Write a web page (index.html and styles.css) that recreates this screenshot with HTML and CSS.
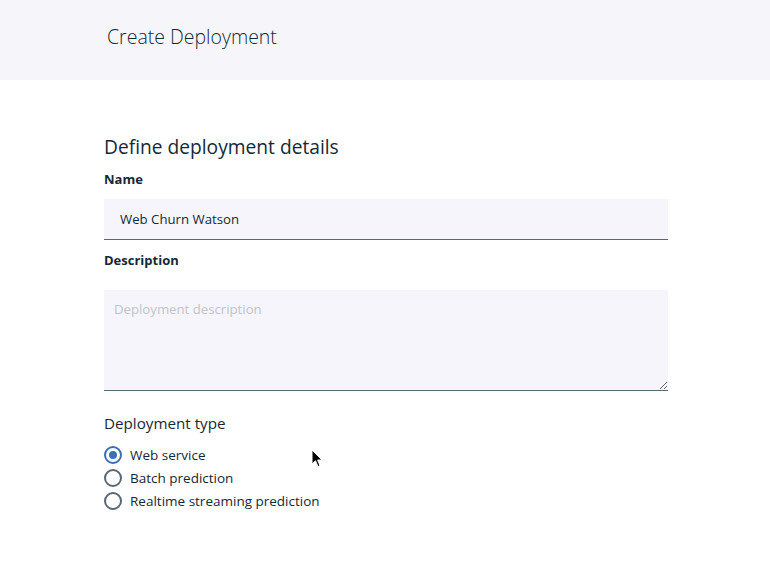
FILE: index.html
```html
<!DOCTYPE html>
<html lang="en">
<head>
<meta charset="utf-8">
<title>Create Deployment</title>
<link rel="stylesheet" href="styles.css">
</head>
<body>
<header class="header">
  <h1 class="header-title">Create Deployment</h1>
</header>
<main class="main">
  <h2 class="section-title">Define deployment details</h2>
  <label class="label" for="name">Name</label>
  <input class="input" id="name" type="text" value="Web Churn Watson">
  <label class="label label-desc" for="desc">Description</label>
  <textarea class="textarea" id="desc" placeholder="Deployment description"></textarea>
  <h3 class="type-title">Deployment type</h3>
  <div class="radios">
    <label class="radio"><span class="radio-circle checked"></span><span>Web service</span></label>
    <label class="radio"><span class="radio-circle"></span><span>Batch prediction</span></label>
    <label class="radio"><span class="radio-circle"></span><span>Realtime streaming prediction</span></label>
  </div>
</main>
<svg class="cursor" width="14" height="20" viewBox="0 0 14 20">
  <path d="M1 1 L1 15 L4.5 11.8 L7 17.5 L9 16.6 L6.6 11 L11 11 Z" fill="#000" stroke="#fff" stroke-width="1"/>
</svg>
</body>
</html>
```
FILE: styles.css
```css
* { box-sizing: border-box; }
html, body { margin: 0; padding: 0; background: #fff; }
body {
  font-family: "Open Sans", "Noto Sans", sans-serif;
  color: #152935;
  width: 770px;
  height: 563px;
  overflow: hidden;
  position: relative;
}
.header {
  height: 80px;
  background: #f5f5fa;
  padding-left: 107px;
  display: flex;
  align-items: center;
}
.header-title {
  margin: 0 0 8px 0;
  font-size: 19.5px;
  font-weight: 300;
  color: #152935;
}
.main {
  padding-left: 104px;
  width: 668px;
  display: flex;
  flex-direction: column;
}
.section-title {
  margin: 54px 0 0 0;
  font-size: 19.2px;
  font-weight: 400;
  line-height: 26px;
}
.label {
  font-size: 13px;
  font-weight: 700;
  line-height: 18px;
  margin-top: 10px;
}
.input {
  margin-top: 11px;
  height: 41px;
  border: none;
  border-bottom: 1px solid #5a6872;
  background: #f5f5fb;
  font-family: inherit;
  font-size: 13.2px;
  color: #152935;
  padding: 0 16px;
  outline: none;
}
.label-desc { margin-top: 11px; }
.textarea {
  margin-top: 21px;
  height: 101px;
  border: none;
  border-bottom: 1px solid #5a6872;
  background: #f5f5fb;
  font-family: inherit;
  font-size: 13.2px;
  padding: 10px 10px;
  resize: vertical;
  outline: none;
}
.textarea::placeholder { color: #c2c4cc; }
.type-title {
  margin: 22px 0 0 0;
  font-size: 15.2px;
  font-weight: 400;
  line-height: 20px;
}
.radios {
  margin-top: 10px;
  display: flex;
  flex-direction: column;
}
.radio {
  display: flex;
  align-items: center;
  gap: 8px;
  height: 23px;
  font-size: 13.5px;
}
.radio-circle {
  width: 18px;
  height: 18px;
  border-radius: 50%;
  border: 2px solid #5a6872;
  display: flex;
  align-items: center;
  justify-content: center;
}
.radio-circle.checked { border-color: #3d70b2; }
.radio-circle.checked::after {
  content: "";
  width: 8px;
  height: 8px;
  border-radius: 50%;
  background: #3d70b2;
}
.cursor {
  position: absolute;
  left: 311px;
  top: 449px;
}
```
